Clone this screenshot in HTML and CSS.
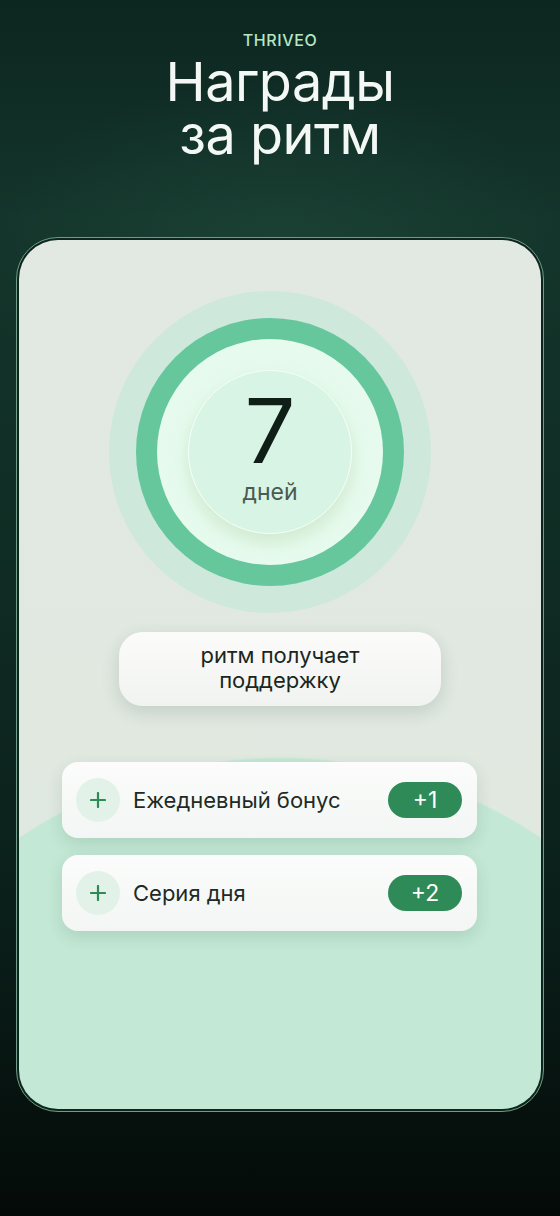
FILE: index.html
```html
<!DOCTYPE html>
<html lang="ru">
<head>
  <meta charset="UTF-8">
  <title>Thriveo — Награды за ритм</title>
  <link rel="stylesheet" href="styles.css">
</head>
<body>
  <header class="top">
    <p class="brand">THRIVEO</p>
    <h1 class="title">Награды<br>за ритм</h1>
  </header>

  <div class="frame">
    <section class="card">
      <!-- счетчик дней -->
      <div class="halo">
        <div class="ring">
          <div class="disc">
            <div class="core">
              <span class="count">7</span>
              <span class="unit">дней</span>
            </div>
          </div>
        </div>
      </div>

      <div class="pill">ритм получает<br>поддержку</div>

      <ul class="rewards">
        <li class="reward">
          <span class="plus">
            <svg width="16" height="16" viewBox="0 0 16 16"><path d="M8 1v14M1 8h14" stroke="#2e8b57" stroke-width="2.2" stroke-linecap="round"/></svg>
          </span>
          <span class="label">Ежедневный бонус</span>
          <span class="badge">+1</span>
        </li>
        <li class="reward">
          <span class="plus">
            <svg width="16" height="16" viewBox="0 0 16 16"><path d="M8 1v14M1 8h14" stroke="#2e8b57" stroke-width="2.2" stroke-linecap="round"/></svg>
          </span>
          <span class="label">Серия дня</span>
          <span class="badge">+2</span>
        </li>
      </ul>
    </section>
  </div>
</body>
</html>
```

FILE: styles.css
```css
html, body {
  margin: 0;
  padding: 0;
}
body {
  width: 560px;
  height: 1216px;
  overflow: hidden;
  font-family: Inter, "Noto Sans", sans-serif;
  background:
    radial-gradient(ellipse 420px 260px at 50% 260px, rgba(40, 90, 70, 0.35), transparent 70%),
    linear-gradient(180deg, #0c2620 0px, #14352b 220px, #0f2b23 600px, #0a1d18 950px, #040a08 1216px);
}

.top {
  text-align: center;
  padding-top: 31px;
  height: 206px;
  box-sizing: border-box;
}
.brand {
  margin: 0;
  color: #b6e6c4;
  font-size: 16px;
  font-weight: 500;
  letter-spacing: 0.6px;
  line-height: 18px;
}
.title {
  margin: 6px 0 0;
  color: #f3f8f4;
  font-size: 54px;
  font-weight: 400;
  line-height: 53px;
  letter-spacing: -0.5px;
}

.frame {
  margin: 31px 16px 0;
  padding: 2px;
  border: 1px solid #6f9c84;
  border-radius: 42px;
  background: #0d251e;
}
.card {
  height: 869px;
  border-radius: 39px;
  overflow: hidden;
  background:
    radial-gradient(circle 466px at 50% 983px, #c3e8d5 99.6%, transparent 100%),
    linear-gradient(180deg, #e2e9e2, #dfe8e0);
  padding-top: 51px;
  box-sizing: border-box;
}

.halo {
  width: 322px;
  height: 322px;
  margin: 0 0 0 90px;
  border-radius: 50%;
  background: #cfe8dc;
  display: flex;
  align-items: center;
  justify-content: center;
}
.ring {
  width: 268px;
  height: 268px;
  border-radius: 50%;
  background: #66c79d;
  display: flex;
  align-items: center;
  justify-content: center;
}
.disc {
  width: 226px;
  height: 226px;
  border-radius: 50%;
  background: #e6fbee;
  display: flex;
  align-items: center;
  justify-content: center;
}
.core {
  width: 162px;
  height: 162px;
  border-radius: 50%;
  border: 1px solid #f4fff8;
  background: #d8f4e4;
  box-shadow: 0 8px 18px rgba(170, 200, 150, 0.35);
  display: flex;
  flex-direction: column;
  align-items: center;
  justify-content: center;
}
.count {
  color: #0f1f18;
  font-size: 90px;
  font-weight: 400;
  line-height: 76px;
  margin-top: -6px;
}
.unit {
  color: #4a5a50;
  font-size: 23px;
  line-height: 26px;
  margin-top: 10px;
}

.pill {
  width: 322px;
  height: 74px;
  margin: 19px auto 0;
  padding-bottom: 3px;
  box-sizing: border-box;
  border-radius: 24px;
  background: linear-gradient(180deg, #fbfbfa, #f1f3f1);
  box-shadow: 0 6px 18px rgba(40, 70, 50, 0.16);
  display: flex;
  align-items: center;
  justify-content: center;
  text-align: center;
  color: #1a2620;
  font-size: 22px;
  line-height: 25px;
}

.rewards {
  list-style: none;
  margin: 56px 0 0 43px;
  padding: 0;
  width: 415px;
  display: flex;
  flex-direction: column;
  gap: 17px;
}
.reward {
  height: 76px;
  border-radius: 16px;
  background: linear-gradient(180deg, #fbfcfb, #f3f6f4);
  box-shadow: 0 6px 16px rgba(40, 80, 60, 0.14);
  display: flex;
  align-items: center;
  padding: 0 15px 0 14px;
  box-sizing: border-box;
}
.plus {
  width: 44px;
  height: 44px;
  border-radius: 50%;
  background: #e3f2e9;
  display: flex;
  align-items: center;
  justify-content: center;
  flex-shrink: 0;
}
.label {
  flex: 1;
  margin-left: 13px;
  color: #1e2a24;
  font-size: 22px;
}
.badge {
  width: 74px;
  height: 36px;
  border-radius: 18px;
  background: #2e8b57;
  color: #fff;
  font-size: 23px;
  display: flex;
  align-items: center;
  justify-content: center;
}
```
